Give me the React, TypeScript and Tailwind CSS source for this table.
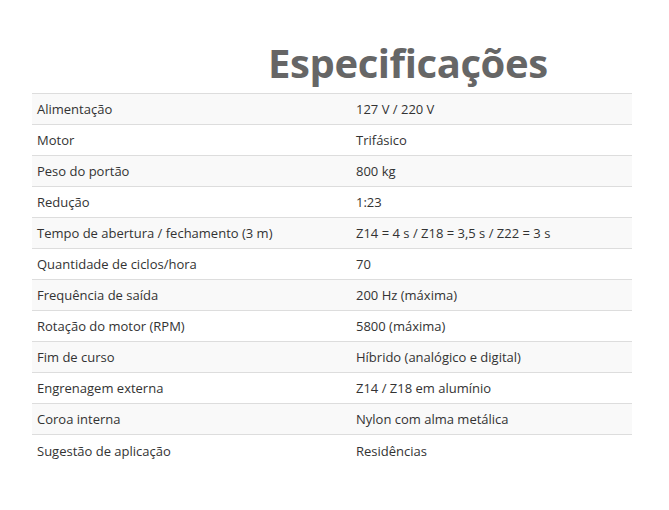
const rows: [string, string][] = [
  ["Alimentação", "127 V / 220 V"],
  ["Motor", "Trifásico"],
  ["Peso do portão", "800 kg"],
  ["Redução", "1:23"],
  ["Tempo de abertura / fechamento (3 m)", "Z14 = 4 s / Z18 = 3,5 s / Z22 = 3 s"],
  ["Quantidade de ciclos/hora", "70"],
  ["Frequência de saída", "200 Hz (máxima)"],
  ["Rotação do motor (RPM)", "5800 (máxima)"],
  ["Fim de curso", "Híbrido (analógico e digital)"],
  ["Engrenagem externa", "Z14 / Z18 em alumínio"],
  ["Coroa interna", "Nylon com alma metálica"],
  ["Sugestão de aplicação", "Residências"],
];

export default function App() {
  return (
    <div className="w-[669px] h-[510px] bg-white" style={{ fontFamily: '"Open Sans", sans-serif' }}>
      <div className="pt-[33px] pl-[32px]">
        <h1 className="pl-[236px] text-[40px] font-bold leading-[60px] text-[#666666] tracking-[-0.4px]">
          Especificações
        </h1>
        <table className="w-[600px] border-collapse text-[13px] text-[#333333]">
          <tbody>
            {rows.map(([k, v], i) => (
              <tr key={k} className={i % 2 === 0 ? "bg-[#f9f9f9]" : "bg-white"}>
                <td className="w-[319px] h-[31px] border-t border-[#dddddd] px-[5px] pt-[2px] align-middle">{k}</td>
                <td className="h-[31px] border-t border-[#dddddd] px-[5px] pt-[2px] align-middle">{v}</td>
              </tr>
            ))}
          </tbody>
        </table>
      </div>
    </div>
  );
}
